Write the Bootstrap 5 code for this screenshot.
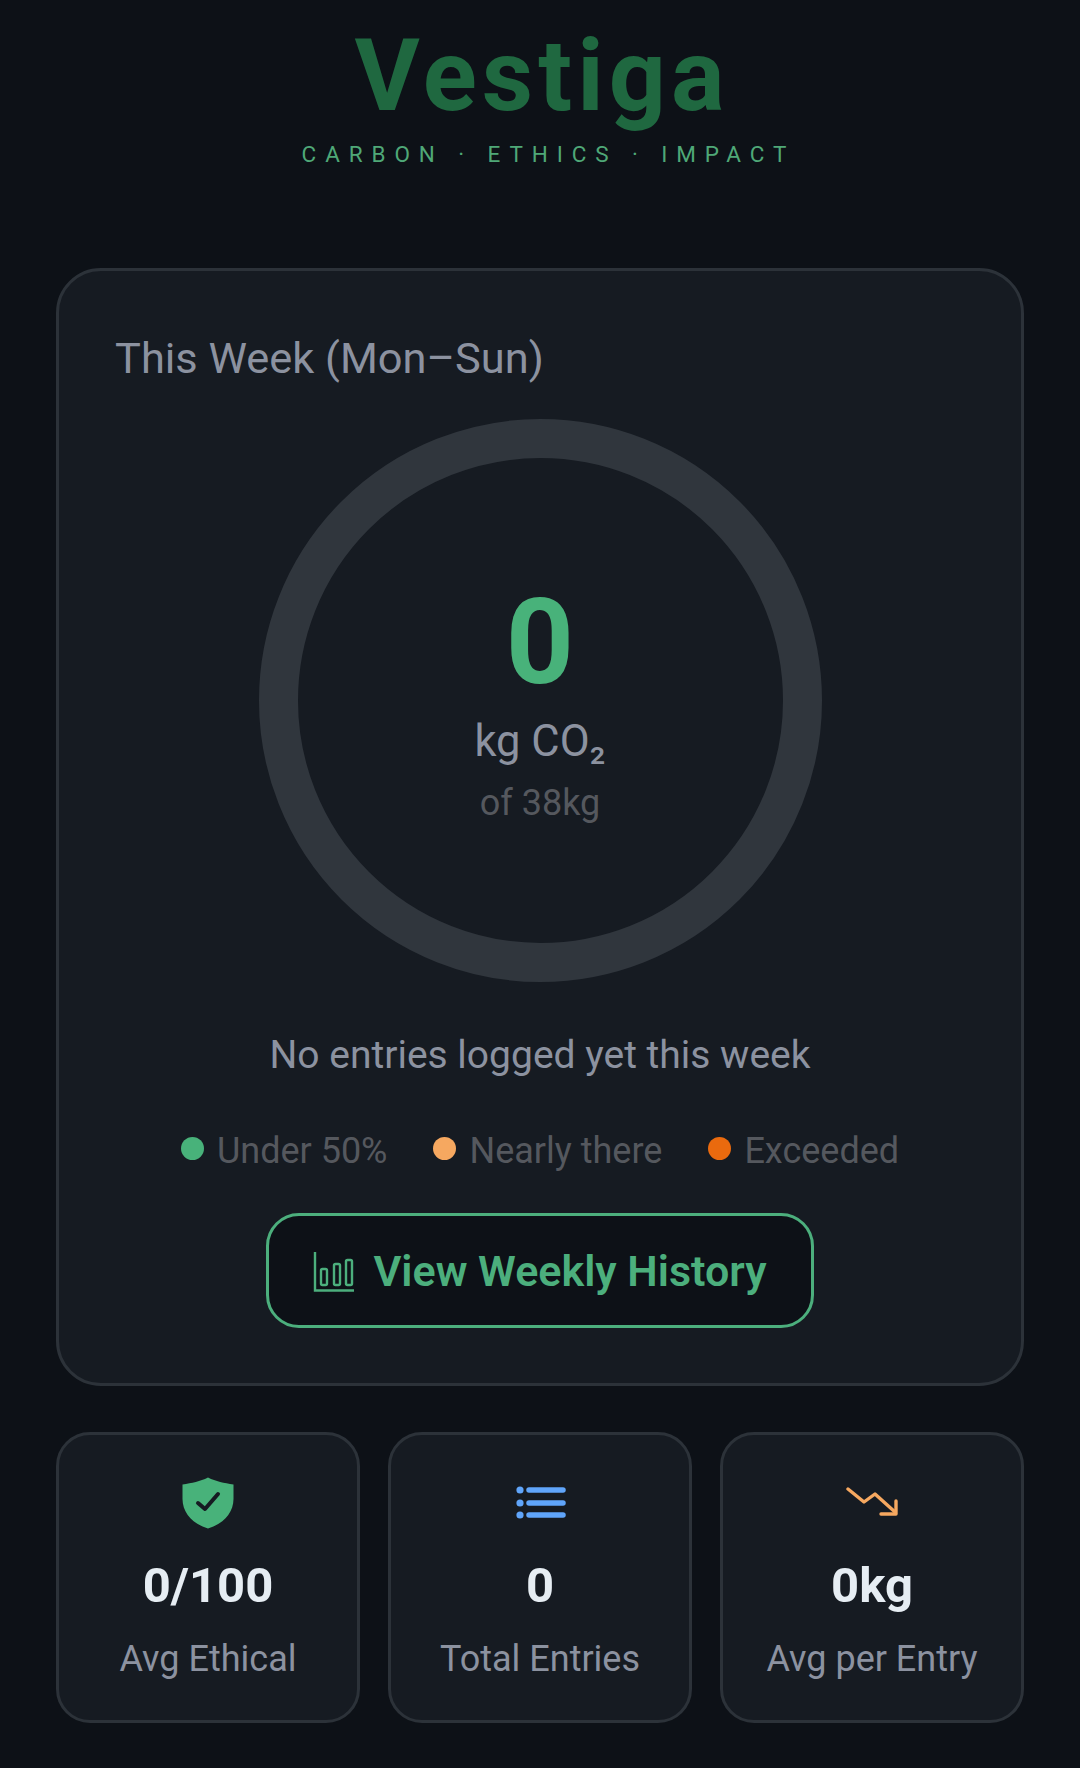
<!DOCTYPE html>
<html lang="en">
<head>
  <meta charset="UTF-8">
  <meta name="viewport" content="width=device-width, initial-scale=1.0">
  <title>Vestiga</title>
  <link href="https://cdn.jsdelivr.net/npm/bootstrap@5.3.3/dist/css/bootstrap.min.css" rel="stylesheet">
  <style>
    body { background: #0d1117; font-family: Roboto, "Liberation Sans", sans-serif; height: 1768px; overflow: hidden; }
    .app-wrap { padding: 0 56px; }
    .brand-head { height: 268px; padding-top: 26px; }
    .brand-name { font-size: 100px; font-weight: 700; line-height: 100px; letter-spacing: 5.100px; color: #1f6840; margin: 0; padding-left: 4px; }
    .brand-sub { font-size: 22.5px; line-height: 28px; letter-spacing: 8.900px; color: #4fa877; margin-top: 14px; padding-left: 17px; }
    .week-panel { background: #161b22; border: 3px solid #2c3239; border-radius: 45px; height: 1118px; padding: 0 56px; }
    .week-title { font-size: 43.400px; line-height: 50px; color: #8c92a0; margin-top: 63px; }
    .co2-ring { width: 563px; height: 563px; border: 39px solid #30363d; border-radius: 50%; margin: 35px auto 0; }
    .co2-num { font-size: 119px; line-height: 118px; font-weight: 700; color: #48b27a; margin-top: 8px; }
    .co2-unit { font-size: 43.500px; line-height: 50px; color: #8c92a0; margin-top: 15px; }
    .co2-of { font-size: 36px; line-height: 44px; color: #55585e; margin-top: 14px; }
    .week-note { font-size: 39px; line-height: 46px; color: #8c92a0; margin-top: 50px; }
    .legend-row { gap: 46px; margin-top: 50px; height: 46px; }
    .legend-item { gap: 13px; font-size: 36px; color: #55585e; }
    .legend-dot { width: 23px; height: 23px; border-radius: 50%; margin-top: -6px; }
    .btn.history-btn { width: 548px; height: 115px; margin: 39px auto 0; padding-top: 8px; background: #0d1117; border: 3px solid #4caf7d; border-radius: 33px; color: #4caf7d; font-size: 43px; font-weight: 600; gap: 18px; }
    .stat-row { gap: 28px; margin-top: 46px; }
    .stat-tile { width: 304px; height: 291px; background: #161b22; border: 3px solid #2c3239; border-radius: 34px; padding-top: 42px; }
    .stat-icon { height: 54px; }
    .stat-val { font-size: 49px; line-height: 58px; font-weight: 700; color: #e6edf3; margin-top: 26px; }
    .stat-label { font-size: 36px; line-height: 44px; color: #8c92a0; margin-top: 22px; }
  </style>
</head>
<body>

<div class="app-wrap">
  <!-- Header -->
  <div class="brand-head text-center">
    <h1 class="brand-name">Vestiga</h1>
    <div class="brand-sub">CARBON · ETHICS · IMPACT</div>
  </div>

  <!-- This week -->
  <div class="week-panel d-flex flex-column">
    <div class="week-title">This Week (Mon–Sun)</div>
    <div class="co2-ring d-flex flex-column align-items-center justify-content-center">
      <div class="co2-num">0</div>
      <div class="co2-unit">kg CO₂</div>
      <div class="co2-of">of 38kg</div>
    </div>
    <div class="week-note text-center">No entries logged yet this week</div>
    <div class="legend-row d-flex justify-content-center">
      <div class="legend-item d-flex align-items-center"><span class="legend-dot" style="background:#48b27a"></span>Under 50%</div>
      <div class="legend-item d-flex align-items-center"><span class="legend-dot" style="background:#f6a860"></span>Nearly there</div>
      <div class="legend-item d-flex align-items-center"><span class="legend-dot" style="background:#ea6a0e"></span>Exceeded</div>
    </div>
    <button class="btn history-btn d-flex align-items-center justify-content-center" type="button">
      <svg width="42" height="42" viewBox="0 0 42 42" fill="none" stroke="#4caf7d" stroke-width="2.4">
        <path d="M2 1V39.500H41"/>
        <rect x="8" y="18" width="6" height="16" rx="1.500"/>
        <rect x="21" y="13" width="6" height="21" rx="1.500"/>
        <rect x="33" y="9" width="6" height="25" rx="1.500"/>
      </svg>
      View Weekly History
    </button>
  </div>

  <!-- Stats -->
  <div class="stat-row d-flex">
    <div class="stat-tile text-center">
      <div class="stat-icon">
        <svg width="52" height="52" viewBox="0 0 52 52">
          <path fill="#48b27a" d="M26 .5C34 4.500 42 6 51.500 7.500V22C51.500 36 41 47 26 51.500 11 47 .5 36 .5 22V7.500C10 6 18 4.500 26 .5Z"/>
          <path fill="none" stroke="#161b22" stroke-width="4" stroke-linecap="round" stroke-linejoin="round" d="M16 26l7 6 13-15"/>
        </svg>
      </div>
      <div class="stat-val">0/100</div>
      <div class="stat-label">Avg Ethical</div>
    </div>
    <div class="stat-tile text-center">
      <div class="stat-icon">
        <svg width="52" height="52" viewBox="0 0 52 52">
          <g fill="#60a5fa"><circle cx="6" cy="13" r="3.600"/><circle cx="6" cy="26" r="3.600"/><circle cx="6" cy="38" r="3.600"/></g>
          <g stroke="#60a5fa" stroke-width="5.500" stroke-linecap="round"><path d="M15 13H49"/><path d="M15 26H49"/><path d="M15 38H49"/></g>
        </svg>
      </div>
      <div class="stat-val">0</div>
      <div class="stat-label">Total Entries</div>
    </div>
    <div class="stat-tile text-center">
      <div class="stat-icon">
        <svg width="52" height="52" viewBox="0 0 52 52" fill="none" stroke="#f6a860" stroke-width="3.400" stroke-linecap="round" stroke-linejoin="round">
          <path d="M2 12L18 25 29 17 49 35"/>
          <path d="M35 37H50V24"/>
        </svg>
      </div>
      <div class="stat-val">0kg</div>
      <div class="stat-label">Avg per Entry</div>
    </div>
  </div>
</div>

<script src="https://cdn.jsdelivr.net/npm/bootstrap@5.3.3/dist/js/bootstrap.bundle.min.js"></script>
</body>
</html>
